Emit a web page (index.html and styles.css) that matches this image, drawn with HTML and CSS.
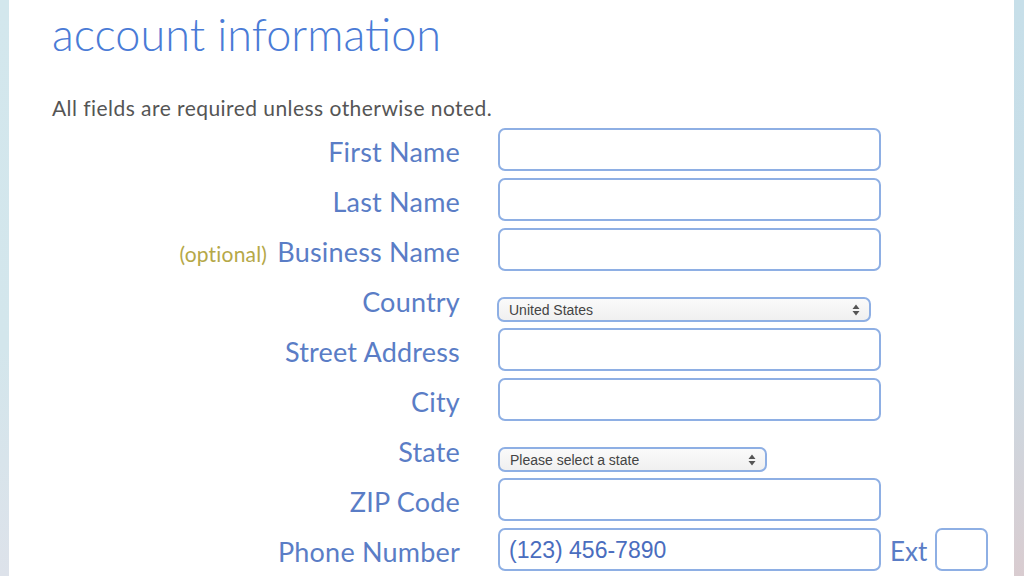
FILE: index.html
```html
<!DOCTYPE html>
<html lang="en">
<head>
<meta charset="utf-8">
<title>account information</title>
<link rel="stylesheet" href="styles.css">
</head>
<body>
<div class="page">
  <div class="strip strip-left"></div>
  <main class="main">
    <h1 class="title">account information</h1>
    <p class="note">All fields are required unless otherwise noted.</p>
    <form class="form">
      <div class="row">
        <label class="label">First Name</label>
        <div class="field"><input class="input" type="text"></div>
      </div>
      <div class="row">
        <label class="label">Last Name</label>
        <div class="field"><input class="input" type="text"></div>
      </div>
      <div class="row">
        <label class="label"><span class="optional">(optional)</span> Business Name</label>
        <div class="field"><input class="input" type="text"></div>
      </div>
      <div class="row">
        <label class="label">Country</label>
        <div class="field field-bottom">
          <div class="select select-country">
            <span class="select-text">United States</span>
            <svg class="arrows" width="8" height="12" viewBox="0 0 8 12"><path d="M4 0.5 L7.5 5 L0.5 5 Z M4 11.5 L7.5 7 L0.5 7 Z" fill="#555"/></svg>
          </div>
        </div>
      </div>
      <div class="row">
        <label class="label">Street Address</label>
        <div class="field"><input class="input" type="text"></div>
      </div>
      <div class="row">
        <label class="label">City</label>
        <div class="field"><input class="input" type="text"></div>
      </div>
      <div class="row">
        <label class="label">State</label>
        <div class="field field-bottom">
          <div class="select select-state">
            <span class="select-text">Please select a state</span>
            <svg class="arrows" width="8" height="12" viewBox="0 0 8 12"><path d="M4 0.5 L7.5 5 L0.5 5 Z M4 11.5 L7.5 7 L0.5 7 Z" fill="#555"/></svg>
          </div>
        </div>
      </div>
      <div class="row">
        <label class="label">ZIP Code</label>
        <div class="field"><input class="input" type="text"></div>
      </div>
      <div class="row">
        <label class="label">Phone Number</label>
        <div class="field">
          <input class="input input-phone" type="text" value="(123) 456-7890">
          <span class="ext-label">Ext</span>
          <input class="input input-ext" type="text">
        </div>
      </div>
    </form>
  </main>
  <div class="strip strip-right"></div>
</div>
</body>
</html>
```
FILE: styles.css
```css
html, body {
  margin: 0;
  padding: 0;
  background: #ffffff;
}

.page {
  display: flex;
  width: 1024px;
  height: 576px;
  overflow: hidden;
}

.strip {
  flex: 0 0 auto;
}

.strip-left {
  width: 9px;
  background: linear-gradient(#d3e7ed, #d3e6ec 60%, #dde2ea);
}

.strip-right {
  width: 10px;
  background: linear-gradient(#c7dfe9, #c8dde7 55%, #d9ccd0);
}

.main {
  flex: 1 1 auto;
  padding-left: 43px;
  background: #ffffff;
}

.title {
  margin: 7px 0 0 0;
  font-family: Lato, "Open Sans", sans-serif;
  font-weight: 300;
  font-size: 45px;
  line-height: 1.2;
  color: #4a7bd6;
}

.note {
  margin: 34px 0 0 0;
  font-family: Lato, "Open Sans", sans-serif;
  font-weight: 400;
  font-size: 21px;
  letter-spacing: 0.45px;
  line-height: 1.2;
  color: #555555;
}

.form {
  margin-top: 8px;
  display: flex;
  flex-direction: column;
  gap: 7px;
}

.row {
  display: flex;
  align-items: flex-start;
  height: 43px;
}

.label {
  width: 408px;
  text-align: right;
  font-family: Lato, "Open Sans", sans-serif;
  font-weight: 400;
  font-size: 27px;
  letter-spacing: 0.2px;
  line-height: 47px;
  color: #5a7dc6;
  white-space: nowrap;
}

.optional {
  font-size: 21px;
  color: #b5a848;
  margin-right: 3px;
}

.field {
  margin-left: 38px;
  height: 43px;
  display: flex;
  align-items: center;
}

.field-bottom {
  align-items: flex-end;
  height: 44px;
}

.input {
  box-sizing: border-box;
  width: 383px;
  height: 43px;
  margin: 0;
  border: 2px solid #8eafe4;
  border-radius: 7px;
  background: #ffffff;
  padding: 0 8px;
  outline: none;
  font-family: "Liberation Sans", Arial, sans-serif;
  font-size: 22px;
  color: #4a6dbe;
}

.input-phone {
  font-size: 23px;
  padding-left: 9px;
  padding-top: 2px;
}

.input-ext {
  width: 53px;
  padding: 0;
}

.ext-label {
  margin: 0 8px 0 9px;
  font-family: Lato, "Open Sans", sans-serif;
  font-size: 26px;
  line-height: 47px;
  color: #5a7dc6;
  align-self: flex-start;
}

.select {
  box-sizing: border-box;
  position: relative;
  height: 25px;
  border: 2px solid #8eafe4;
  border-radius: 7px;
  background: linear-gradient(#fafafa, #f0f0f0);
  display: flex;
  align-items: center;
  padding-left: 10px;
  font-family: "Liberation Sans", Arial, sans-serif;
  font-size: 14px;
  color: #444444;
}

.select-country {
  width: 374px;
  margin-left: -1px;
}

.select-state {
  width: 269px;
}

.arrows {
  position: absolute;
  right: 9px;
  top: 5px;
}
```
